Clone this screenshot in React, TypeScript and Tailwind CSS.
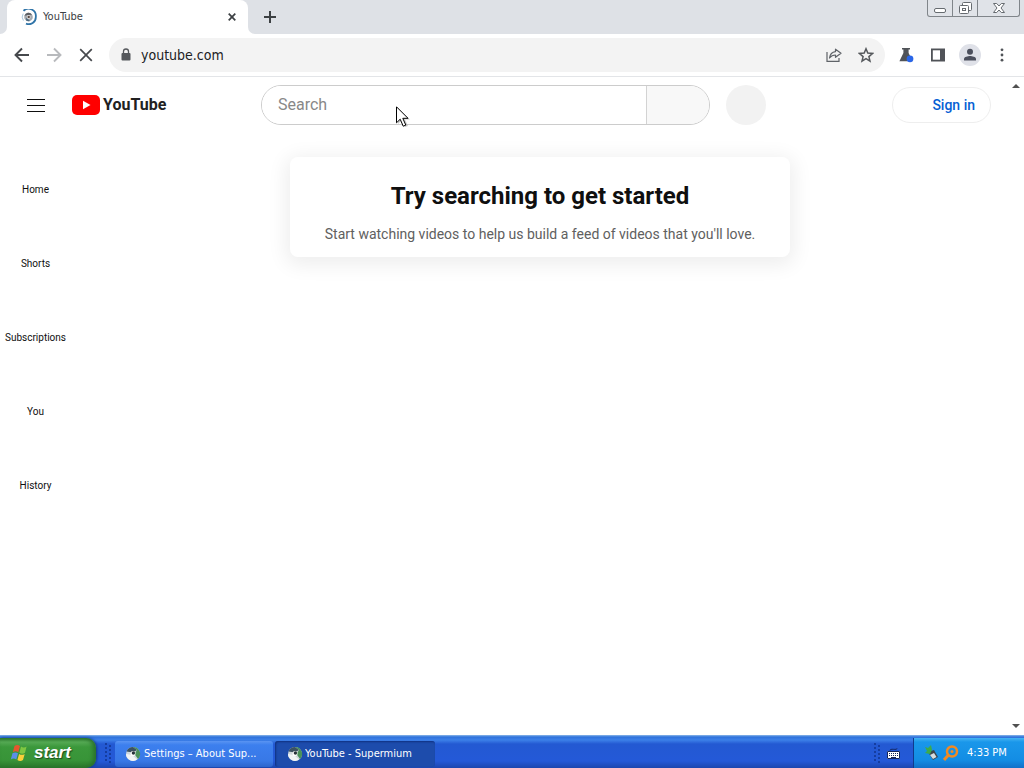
import React from "react";

const ui = "font-['DejaVu_Sans_Condensed','DejaVu_Sans',sans-serif]";

function BrandMark() {
  return (
    <svg viewBox="0 0 16 16" className="size-4 shrink-0" aria-hidden="true">
      <path d="M2.500 1.800A7.300 7.300 0 0 1 14.800 8 7 7 0 0 1 5 14.600" fill="none" stroke="#2f74a8" strokeWidth="1.800" />
      <path d="M2.200 4.600A6.400 6.400 0 0 0 2.400 11.600" fill="none" stroke="#a9c6da" strokeWidth="1" />
      <circle cx="7.5" cy="8" r="4.3" fill="#a4a9ae" />
      <path d="M3.400 6.700a4.300 4.300 0 0 1 7.600-1L7.500 6z" fill="#5b5f64" />
      <path d="M5 11.500 5.400 8.500 9 12a4.200 4.200 0 0 1-4-.5z" fill="#4f6b80" />
      <circle cx="7.600" cy="7.900" r="1.900" fill="#e8e8e8" />
      <circle cx="7.700" cy="7.900" r="1.200" fill="#5a4a42" />
    </svg>
  );
}

function SupermiumIcon() {
  return (
    <svg viewBox="0 0 16 16" className="size-4 shrink-0" aria-hidden="true">
      <circle cx="8" cy="8" r="7" fill="#cfd8dc" />
      <path d="M8 1a7 7 0 0 1 5 12L9.5 8 12 4z" fill="#49915a" />
      <path d="M1.5 5.5A7 7 0 0 1 8 1l4 3-4 2.5z" fill="#3b5261" />
      <path d="M1 8a7 7 0 0 0 11 5.6L7 9z" fill="#f0f4f5" />
      <circle cx="8" cy="7.4" r="2.500" fill="#fff" />
      <circle cx="8.4" cy="7" r="1.700" fill="#27333b" />
    </svg>
  );
}

function TabStrip() {
  return (
    <div className="flex h-[34px] shrink-0 items-stretch bg-[#dee1e6] pl-[7px] pr-1">
      <div className="relative flex w-[241px] items-center rounded-t-lg bg-white pl-[14px] pr-[10px]">
        <BrandMark />
        <span className="ml-[6px] flex-1 text-[11px] text-[#3c4043]">YouTube</span>
        <button aria-label="Close tab" className="p-[2px]">
          <svg viewBox="0 0 8 8" className="size-2" aria-hidden="true">
            <path d="M.7.7l6.6 6.6M7.3.7.7 7.3" stroke="#3c4043" strokeWidth="1.7" />
          </svg>
        </button>
        <svg viewBox="0 0 7 7" className="absolute bottom-0 -left-[7px] size-[7px]" aria-hidden="true">
          <path d="M7 0v7H0a7 7 0 0 0 7-7z" fill="#fff" />
        </svg>
        <svg viewBox="0 0 7 7" className="absolute bottom-0 -right-[7px] size-[7px]" aria-hidden="true">
          <path d="M0 0v7h7a7 7 0 0 1-7-7z" fill="#fff" />
        </svg>
      </div>
      <button aria-label="New tab" className="ml-[14px] self-center p-[2px]">
        <svg viewBox="0 0 12 12" className="size-3" aria-hidden="true">
          <path d="M6 0v12M0 6h12" stroke="#3c4043" strokeWidth="2" />
        </svg>
      </button>
      <div className="ml-auto flex h-[17px] w-[93px] overflow-hidden rounded-b-[3px] border border-t-0 border-[#80858a] bg-[#e0e3e8]">
        <button aria-label="Minimize" className="flex w-[25px] items-center justify-center border-r border-[#80858a]">
          <svg viewBox="0 0 14 16" className="h-4 w-[14px]" aria-hidden="true">
            <rect x="1.5" y="8.5" width="11" height="4" rx="1.5" fill="#fff" stroke="#666b70" />
          </svg>
        </button>
        <button aria-label="Restore" className="flex w-[25px] items-center justify-center border-r border-[#80858a]">
          <svg viewBox="0 0 14 16" className="h-4 w-[14px]" aria-hidden="true">
            <rect x="4.500" y="2.500" width="9" height="8" rx="1" fill="#fff" stroke="#666b70" />
            <rect x="1.500" y="5.500" width="9" height="8" rx="1" fill="#fff" stroke="#666b70" />
            <rect x="4.500" y="8.500" width="3" height="2" fill="none" stroke="#666b70" />
          </svg>
        </button>
        <button aria-label="Close" className="flex flex-1 items-center justify-center">
          <svg viewBox="0 0 14 16" className="h-4 w-[14px]" aria-hidden="true">
            <path
              d="M1.500 3.500h3.200L7 6l2.300-2.500h3.200L9 8l3.500 4.500H9.300L7 10l-2.300 2.500H1.500L5 8z"
              fill="#fff"
              stroke="#666b70"
            />
          </svg>
        </button>
      </div>
    </div>
  );
}

function Toolbar() {
  return (
    <div className="flex h-[43px] shrink-0 items-center border-b border-[#e3e5e8] bg-white pl-[14px] pr-[14px]">
      <div className="flex gap-4">
        <button aria-label="Back">
          <svg viewBox="0 0 16 16" className="size-4" fill="none" stroke="#46494d" strokeWidth="1.9" aria-hidden="true">
            <path d="M15 8H2M8 1.500 1.500 8 8 14.500" />
          </svg>
        </button>
        <button aria-label="Forward">
          <svg viewBox="0 0 16 16" className="size-4" fill="none" stroke="#b8babd" strokeWidth="1.9" aria-hidden="true">
            <path d="M1 8h13M8 1.500 14.500 8 8 14.500" />
          </svg>
        </button>
        <button aria-label="Stop loading">
          <svg viewBox="0 0 16 16" className="size-4" stroke="#46494d" strokeWidth="1.7" aria-hidden="true">
            <path d="M2.200 2.200l11.600 11.600M13.800 2.200 2.200 13.800" />
          </svg>
        </button>
      </div>
      <div className="ml-[15px] flex h-[34px] flex-1 items-center rounded-full bg-[#f3f3f3] pl-3 pr-[11px]">
        <svg viewBox="0 0 10 14" className="h-[14px] w-[10px]" aria-hidden="true">
          <rect x="0.500" y="5" width="9" height="7.500" rx="1" fill="#55585c" />
          <path d="M2.500 5.500V3.500a2.500 2.500 0 0 1 5 0v2" fill="none" stroke="#55585c" strokeWidth="1.300" />
        </svg>
        <input
          aria-label="Address"
          defaultValue="youtube.com"
          className="ml-[10px] min-w-0 flex-1 bg-transparent text-[14px] text-[#202124] outline-none"
        />
        <div className="flex gap-4">
          <button aria-label="Share">
            <svg viewBox="0 0 16 16" className="size-4" fill="none" stroke="#5f6368" strokeWidth="1.200" aria-hidden="true">
              <path d="M1 5v9.400h12V11" />
              <path d="M9.500 2.200 15 6.300l-5.500 4V8C6.800 8 5 9 3.500 11 4 7.500 6 5 9.500 4.600z" strokeLinejoin="round" />
            </svg>
          </button>
          <button aria-label="Bookmark">
            <svg viewBox="0 0 16 16" className="size-4" fill="none" stroke="#55585c" strokeWidth="1.500" aria-hidden="true">
              <path d="M8 1.800l1.800 4.300 4.700.400-3.600 3.100 1.100 4.500L8 11.700l-4 2.400 1.100-4.500L1.500 6.500l4.700-.4z" />
            </svg>
          </button>
        </div>
      </div>
      <div className="ml-[13px] flex items-center gap-[14px]">
        <button aria-label="Labs">
          <svg viewBox="0 0 16 16" className="size-4" aria-hidden="true">
            <path d="M4 1h8v1.600h-1.400V6l4 8.200H1.400l4-8.200V2.600H4z" fill="#505358" />
            <circle cx="12" cy="11.800" r="3.400" fill="#2a66e8" />
          </svg>
        </button>
        <button aria-label="Side panel" className="ml-[2px]">
          <svg viewBox="0 0 16 16" className="size-4" aria-hidden="true">
            <path d="M1 1.500h14v13H1z" fill="#505358" />
            <path d="M2.800 3.300h7.200v9.400H2.800z" fill="#fff" />
          </svg>
        </button>
        <button aria-label="Profile" className="-ml-[1px]">
          <svg viewBox="0 0 22 22" className="size-[22px]" aria-hidden="true">
            <circle cx="11" cy="11" r="11" fill="#dfe1e8" />
            <circle cx="11" cy="7.700" r="3" fill="#4b4f5c" />
            <path d="M5 16.500v-1.700c0-2 4-2.900 6-2.900s6 .9 6 2.900v1.700z" fill="#4b4f5c" />
          </svg>
        </button>
        <button aria-label="Menu" className="-ml-[1px]">
          <svg viewBox="0 0 16 16" className="size-4" fill="#505358" aria-hidden="true">
            <circle cx="8" cy="2.800" r="1.400" />
            <circle cx="8" cy="8" r="1.400" />
            <circle cx="8" cy="13.200" r="1.400" />
          </svg>
        </button>
      </div>
    </div>
  );
}

function Masthead() {
  return (
    <header className="grid h-14 grid-cols-[245px_minmax(0,505px)_1fr] items-center px-4">
      <div className="flex items-center">
        <button aria-label="Guide" className="flex size-10 items-center justify-center">
          <svg viewBox="0 0 18 13" className="h-[13px] w-[18px]" stroke="#0f0f0f" aria-hidden="true">
            <path d="M0 .5h18M0 6.500h18M0 12.500h18" />
          </svg>
        </button>
        <a href="#home" className="ml-4 flex items-center gap-[3px]">
          <svg viewBox="0 0 28 20" className="h-5 w-7" aria-hidden="true">
            <rect width="28" height="20" rx="5" fill="#f00" />
            <path d="M11 5.700v8.600l7.500-4.300z" fill="#fff" />
          </svg>
          <span className="text-base leading-5 font-bold text-[#212121]">YouTube</span>
        </a>
      </div>
      <div className="flex items-center">
        <form className="flex h-10 min-w-0 flex-1 overflow-hidden rounded-full border border-[#ccc]">
          <input
            aria-label="Search"
            placeholder="Search"
            className="min-w-0 flex-1 bg-white pl-4 text-base outline-none placeholder:text-[#888]"
          />
          <button type="button" aria-label="Run search" className="w-[63px] border-l border-[#d3d3d3] bg-[#f8f8f8]" />
        </form>
        <button aria-label="Voice search" className="ml-4 size-10 rounded-full bg-[#f2f2f2]" />
      </div>
      <a
        href="#signin"
        className="flex h-9 w-[99px] items-center justify-end justify-self-end rounded-full border border-[#eee] pr-[15px] text-sm font-medium text-[#065fd4]"
      >
        Sign in
      </a>
    </header>
  );
}

function Page() {
  return (
    <div className="relative flex min-h-0 flex-1 bg-white font-[Roboto,sans-serif] text-[#0f0f0f]">
      <div className="min-w-0 flex-1">
        <Masthead />
        <div className="flex">
          <nav aria-label="Guide" className="flex w-[73px] shrink-0 flex-col pt-1 pr-[2px]">
            {["Home", "Shorts", "Subscriptions", "You", "History"].map((name) => (
              <a
                key={name}
                href={"#" + name.toLowerCase()}
                className="flex h-[74px] flex-col items-center pt-[46px] text-[10px] leading-[14px]"
              >
                {name}
              </a>
            ))}
          </nav>
          <main className="flex flex-1 justify-center px-4 pt-6">
            <section className="h-[100px] w-full max-w-[500px] rounded-lg pt-[23px] text-center shadow-[0_4px_20px_4px_rgba(0,0,0,0.07)]">
              <h1 className="text-2xl leading-8 font-bold">Try searching to get started</h1>
              <p className="mt-3 text-sm leading-5 text-[#606060]">
                Start watching videos to help us build a feed of videos that you'll love.
              </p>
            </section>
          </main>
        </div>
      </div>
      <div className="flex w-[17px] shrink-0 flex-col items-center justify-between py-[7px]">
        <svg viewBox="0 0 8 4" className="h-1 w-2" aria-hidden="true">
          <path d="M4 0l4 4H0z" fill="#505050" />
        </svg>
        <svg viewBox="0 0 8 4" className="h-1 w-2" aria-hidden="true">
          <path d="M0 0h8L4 4z" fill="#505050" />
        </svg>
      </div>
      <svg viewBox="0 0 14 22" className="absolute top-[29px] left-[396px] h-[22px] w-[14px]" aria-hidden="true">
        <path d="M2 2v16l4-4 3 7 3-1-3-6.500h5z" fill="#999" opacity="0.5" />
        <path d="M.5.800v16l3.700-3.600 3 7 2.600-1.100-3-6.800h5.200z" fill="#fff" stroke="#000" />
      </svg>
    </div>
  );
}

function Grip() {
  return (
    <svg viewBox="0 0 6 22" className="h-[22px] w-[6px] shrink-0" aria-hidden="true">
      {[1, 5, 9, 13, 17].map((y) => (
        <React.Fragment key={y}>
          <rect x="0" y={y} width="2" height="2" fill="#153da0" />
          <rect x="4" y={y + 2} width="2" height="2" fill="#153da0" />
        </React.Fragment>
      ))}
    </svg>
  );
}

function Taskbar() {
  return (
    <div className="flex h-[33px] shrink-0 items-end bg-[linear-gradient(#8db9e8_0px,#2f72dc_2px,#3c80e8_5px,#2359d2_9px,#2459d8_26px,#1c46ae_33px)]">
      <button className="flex h-[30px] w-24 items-center rounded-r-[10px] bg-[linear-gradient(#2f7d2f,#55a954_4px,#3b983b_9px,#389438_22px,#2a762a)] pl-[10px] font-['Liberation_Sans',sans-serif] text-[17px] font-bold text-white italic shadow-[1px_0_3px_#123a7a,inset_-3px_0_4px_#2a722b] [text-shadow:1px_1px_1px_#1b4d1b]">
        <svg viewBox="0 0 20 18" className="h-[18px] w-5" aria-hidden="true">
          <path d="M4.500 2c2-1.400 3.800-1.200 5.500 0L8.300 8.200C6.500 7 4.700 7 2.800 8.200z" fill="#e4572e" />
          <path d="M11 2.600c1.900 1.200 3.700 1.200 5.600 0L15 8.800c-1.900 1.200-3.700 1.200-5.600 0z" fill="#7fc642" />
          <path d="M2.500 9.300c1.900-1.200 3.700-1.200 5.500 0l-1.700 6.200c-1.800-1.200-3.600-1.200-5.500 0z" fill="#5b8fe8" />
          <path d="M9.100 9.900c1.900 1.200 3.700 1.200 5.600 0L13 16.100c-1.900 1.200-3.700 1.200-5.600 0z" fill="#fbcf3a" />
        </svg>
        <span className="ml-1">start</span>
      </button>
      <div className="ml-[9px] flex h-[30px] items-center">
        <Grip />
      </div>
      <div className="ml-1 flex h-[28px] min-w-0 flex-1 items-center gap-[2px] text-[11px] text-white">
        <button className="flex h-[26px] w-[158px] items-center rounded-[3px] bg-[linear-gradient(#5a94f2,#3c7fee_4px,#3878e6_20px,#2d65cc)] pl-[10px]">
          <SupermiumIcon />
          <span className="ml-[3px] truncate pr-1">Settings – About Sup...</span>
        </button>
        <button className="flex h-[26px] w-[160px] items-center rounded-[3px] bg-[#1d4cac] pl-3 shadow-[inset_1px_1px_2px_#103080]">
          <SupermiumIcon />
          <span className="ml-[2px] truncate pr-1">YouTube - Supermium</span>
        </button>
      </div>
      <div className="flex h-[30px] items-center gap-[7px] pr-[13px]">
        <Grip />
        <svg viewBox="0 0 13 11" className="h-[11px] w-[13px]" aria-hidden="true">
          <path d="M3 2.500c0-2.500 7 0 7-2" fill="none" stroke="#15265c" />
          <path d="M0 3h13v8H0z" fill="#fff" />
          <path d="M.5 3.500h12v7H.5z" fill="none" stroke="#15265c" />
          <path d="M2 5.500h9M2 7.500h9" stroke="#15265c" strokeDasharray="1 1" />
          <path d="M4 9.500h5" stroke="#15265c" />
        </svg>
      </div>
      <div className="flex h-[30px] w-[111px] items-center border-l border-[#103a8c] bg-[linear-gradient(#45b4f2,#1a97ea_4px,#138de4_22px,#1170c8)] pl-[10px] text-[11px] text-white">
        <svg viewBox="0 0 16 16" className="size-4" aria-hidden="true">
          <path d="M4 7l6-2 4 7-5 3z" fill="#3d464d" />
          <path d="M6 10l4-2 2.500 4L9 14z" fill="#d7dde0" />
          <path d="M1 2l3 1 3-3 1 5-2 4-5-1 2-2z" fill="#3daa4b" />
        </svg>
        <svg viewBox="0 0 16 16" className="ml-[3px] size-4" fill="none" stroke="#f28a22" aria-hidden="true">
          <circle cx="9" cy="6.500" r="5" strokeWidth="2.500" />
          <circle cx="9" cy="6.500" r="1.500" fill="#f28a22" stroke="none" />
          <path d="M5 10.500 1 15" strokeWidth="3" />
        </svg>
        <span className="ml-2 whitespace-nowrap">4:33 PM</span>
      </div>
    </div>
  );
}

export default function App() {
  return (
    <div className={"flex h-screen flex-col overflow-hidden bg-white " + ui}>
      <TabStrip />
      <Toolbar />
      <Page />
      <Taskbar />
    </div>
  );
}
